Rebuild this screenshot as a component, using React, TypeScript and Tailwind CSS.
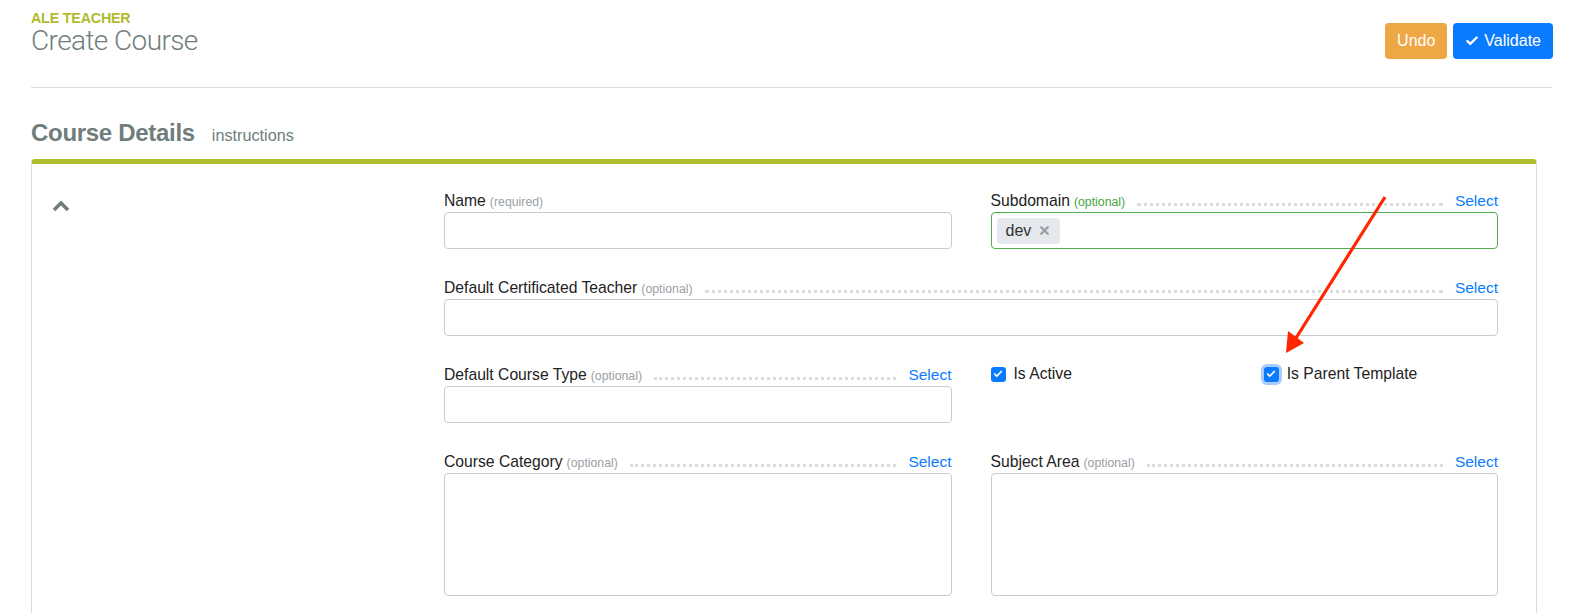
import { Check, X } from 'lucide-react';

const font = { fontFamily: '"Liberation Sans", Arial, sans-serif' };

function FieldLabel({
  name,
  hint,
  hintClass = 'text-[#9aa0a6]',
  select = false,
}: {
  name: string;
  hint: string;
  hintClass?: string;
  select?: boolean;
}) {
  return (
    <div className="flex items-end h-[20px] mb-[2px]">
      <span className="text-[15.7px] text-[#222] leading-[18px] whitespace-nowrap">{name}</span>
      <span className={`ml-[4px] text-[12.3px] leading-[16px] whitespace-nowrap ${hintClass}`}>({hint})</span>
      {select && (
        <>
          <div className="flex-1 mx-[12px] mb-[4px] border-b-[3px] border-dotted border-[#d9dde1]"></div>
          <a href="#" className="text-[15.5px] text-[#0a7bff] leading-[18px]">
            Select
          </a>
        </>
      )}
    </div>
  );
}

function Checkbox({ label, focused = false }: { label: string; focused?: boolean }) {
  return (
    <label className="flex items-center h-[20px] gap-[8px]">
      <span
        className={`w-[15px] h-[15px] rounded-[3px] bg-[#0a7bff] flex items-center justify-center ${
          focused ? 'ring-[3px] ring-[#a9cdfb]' : ''
        }`}
      >
        <Check size={10} strokeWidth={4} className="text-white" />
      </span>
      <span className="text-[15.7px] text-[#222]">{label}</span>
    </label>
  );
}

export default function App() {
  return (
    <div className="min-h-screen bg-white pl-[31px] pr-[17px] pt-[10px] relative overflow-hidden" style={font}>
      {/* Header */}
      <div className="flex justify-between items-start">
        <div>
          <div className="text-[14.3px] font-bold text-[#b0bb2f] leading-[16px] tracking-[-0.2px]">ALE TEACHER</div>
          <h1
            className="text-[28px] text-[#6f7d7d] leading-[30px] font-light tracking-[-0.6px]"
            style={{ fontFamily: 'Roboto, "Liberation Sans", sans-serif' }}
          >
            Create Course
          </h1>
        </div>
        <div className="flex gap-[6px] mt-[13px] mr-[-1px]">
          <button className="h-[36px] px-[12px] rounded-[4px] bg-[#eea745] text-white text-[16px]">Undo</button>
          <button className="h-[36px] px-[12px] rounded-[4px] bg-[#0a7bff] text-white text-[16px] flex items-center gap-[5px]">
            <Check size={14} strokeWidth={4} />
            Validate
          </button>
        </div>
      </div>

      <hr className="mt-[28px] border-0 border-t border-[#dedede]" />

      {/* Section title */}
      <div className="flex items-baseline mt-[31px] gap-[17px] h-[28px]">
        <h2 className="text-[24px] leading-[28px] font-bold text-[#6f7d7d] tracking-[-0.3px]">Course Details</h2>
        <span className="text-[16.2px] text-[#6f7d7d]">instructions</span>
      </div>

      {/* Card */}
      <div className="mt-[12px] mr-[15px] border border-[#dcdcdc] border-t-[5px] border-t-[#b0bb2f] rounded-t-[4px] flex pb-[40px]">
        <div className="w-[412px] pl-[20px] pt-[36px]">
          <svg width="18" height="12" viewBox="0 0 18 12">
            <polyline points="2,10 9,3 16,10" fill="none" stroke="#6f7d7d" strokeWidth="3.5" />
          </svg>
        </div>

        <div className="flex-1 pr-[38px] pt-[26px] grid grid-cols-2 gap-x-[39px] gap-y-[28px]">
          {/* Name */}
          <div>
            <FieldLabel name="Name" hint="required" />
            <div className="h-[37px] border border-[#c9ccd1] rounded-[4px]"></div>
          </div>

          {/* Subdomain */}
          <div>
            <FieldLabel name="Subdomain" hint="optional" hintClass="text-[#43a743]" select />
            <div className="h-[37px] border border-[#4cae4c] rounded-[4px] flex items-center px-[5px]">
              <span className="h-[26px] px-[9px] rounded-[4px] bg-[#e5e8ec] flex items-center gap-[7px] text-[16px] text-[#333]">
                dev
                <X size={13} strokeWidth={4.5} className="text-[#9aa0a6]" />
              </span>
            </div>
          </div>

          {/* Default Certificated Teacher */}
          <div className="col-span-2">
            <FieldLabel name="Default Certificated Teacher" hint="optional" select />
            <div className="h-[37px] border border-[#c9ccd1] rounded-[4px]"></div>
          </div>

          {/* Default Course Type */}
          <div>
            <FieldLabel name="Default Course Type" hint="optional" select />
            <div className="h-[37px] border border-[#c9ccd1] rounded-[4px]"></div>
          </div>

          {/* Checkboxes */}
          <div className="grid grid-cols-2 gap-x-[39px] items-start">
            <Checkbox label="Is Active" />
            <Checkbox label="Is Parent Template" focused />
          </div>

          {/* Course Category */}
          <div>
            <FieldLabel name="Course Category" hint="optional" select />
            <div className="h-[123px] border border-[#c9ccd1] rounded-[4px]"></div>
          </div>

          {/* Subject Area */}
          <div>
            <FieldLabel name="Subject Area" hint="optional" select />
            <div className="h-[123px] border border-[#c9ccd1] rounded-[4px]"></div>
          </div>
        </div>
      </div>

      {/* Annotation arrow */}
      <svg className="absolute left-0 top-0 pointer-events-none" width="1569" height="613">
        <line x1="1385" y1="197" x2="1296" y2="338" stroke="#ff2600" strokeWidth="3.2" />
        <polygon points="1286,353 1288,331 1304,343" fill="#ff2600" />
      </svg>
    </div>
  );
}
